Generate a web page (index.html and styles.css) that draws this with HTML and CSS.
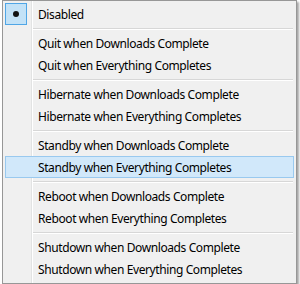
FILE: index.html
```html
<!DOCTYPE html>
<html lang="en">
<head>
    <meta charset="UTF-8">
    <title>When Done</title>
    <link rel="stylesheet" href="styles.css">
</head>
<body>
    <div class="desk">
        <div class="menu">
            <div class="item checked"><span class="check"><span class="dot"></span></span>Disabled</div>
            <div class="sep"></div>
            <div class="item">Quit when Downloads Complete</div>
            <div class="item">Quit when Everything Completes</div>
            <div class="sep"></div>
            <div class="item">Hibernate when Downloads Complete</div>
            <div class="item">Hibernate when Everything Completes</div>
            <div class="sep"></div>
            <div class="item">Standby when Downloads Complete</div>
            <div class="item hover">Standby when Everything Completes</div>
            <div class="sep"></div>
            <div class="item">Reboot when Downloads Complete</div>
            <div class="item">Reboot when Everything Completes</div>
            <div class="sep"></div>
            <div class="item">Shutdown when Downloads Complete</div>
            <div class="item">Shutdown when Everything Completes</div>
        </div>
    </div>
</body>
</html>
```

FILE: styles.css
```css
body {
    margin: 0;
    background-color: #fff;
    font-family: "Noto Sans", sans-serif;
    font-size: 12px;
    letter-spacing: -0.4px;
    color: #000;
}

.desk {
    width: 300px;
    height: 284px;
    overflow: hidden;
    padding-left: 2px;
    box-sizing: border-box;
}

.menu {
    width: 295px;
    height: 284px;
    box-sizing: border-box;
    border: 1px solid #979797;
    padding: 2px 2px 3px 2px;
    background: linear-gradient(to right, transparent 28px, #e2e3e3 28px, #e2e3e3 29px, #fff 29px, #fff 30px, transparent 30px) #f0f0f0;
    box-shadow: 2px 2px 2px rgba(0, 0, 0, 0.35);
}

.item {
    position: relative;
    height: 22px;
    line-height: 22px;
    padding-left: 32px;
    border: 1px solid transparent;
    box-sizing: border-box;
    white-space: nowrap;
}

.item.hover {
    background-color: #d1e8fa;
    border-color: #99c9ef;
}

/* radio mark for the chosen entry */
.check {
    position: absolute;
    left: -1px;
    top: -1px;
    width: 22px;
    height: 22px;
    box-sizing: border-box;
    border: 1px solid #50a6e6;
    background-color: #c3e2f7;
}

.dot {
    position: absolute;
    left: 7px;
    top: 7px;
    width: 6px;
    height: 6px;
    border-radius: 50%;
    background-color: #111;
}

.sep {
    height: 7px;
    margin: 0 1px 0 28px;
    box-sizing: border-box;
    padding-top: 3px;
}

.sep::before {
    content: "";
    display: block;
    height: 1px;
    background-color: #d7d7d7;
    border-bottom: 1px solid #fff;
}
```
